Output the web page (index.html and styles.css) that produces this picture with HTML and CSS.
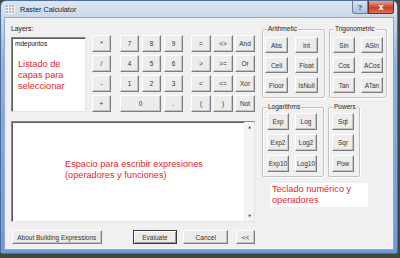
FILE: index.html
```html
<!DOCTYPE html>
<html>
<head>
<meta charset="utf-8">
<link rel="stylesheet" href="styles.css">
</head>
<body>
<div class="window">
  <div class="titlebar">
    <svg class="appicon" width="9" height="9" viewBox="0 0 9 9">
      <rect x="0" y="0" width="9" height="9" fill="#f4f4f4"/>
      <g fill="#b8b8b8">
        <rect x="0" y="0" width="2" height="2"/><rect x="3" y="0" width="2" height="2"/><rect x="6" y="0" width="2" height="2"/>
        <rect x="0" y="3" width="2" height="2"/><rect x="3" y="3" width="2" height="2"/><rect x="6" y="3" width="2" height="2"/>
        <rect x="0" y="6" width="2" height="2"/><rect x="3" y="6" width="2" height="2"/><rect x="6" y="6" width="2" height="2"/>
      </g>
    </svg>
    <span class="title">Raster Calculator</span>
    <div class="caption-btns">
      <span class="cbtn help">?</span>
      <span class="cbtn close">x</span>
    </div>
  </div>
  <div class="client">
    <div class="leftcol">
      <div class="toprow">
        <div class="layers">
          <div class="lbl">Layers:</div>
          <div class="listbox">
            <div class="item">mdepuntos</div>
            <div class="note-red list-note">Listado de<br>capas para<br>seleccionar</div>
          </div>
        </div>
        <div class="keypad">
          <div class="kcol">
            <span class="btn">*</span>
            <span class="btn">/</span>
            <span class="btn">-</span>
            <span class="btn">+</span>
          </div>
          <div class="kgrid digits">
            <span class="btn">7</span><span class="btn">8</span><span class="btn">9</span>
            <span class="btn">4</span><span class="btn">5</span><span class="btn">6</span>
            <span class="btn">1</span><span class="btn">2</span><span class="btn">3</span>
            <span class="btn span2">0</span><span class="btn">.</span>
          </div>
          <div class="kgrid ops">
            <span class="btn">=</span><span class="btn">&lt;&gt;</span><span class="btn">And</span>
            <span class="btn">&gt;</span><span class="btn">&gt;=</span><span class="btn">Or</span>
            <span class="btn">&lt;</span><span class="btn">&lt;=</span><span class="btn">Xor</span>
            <span class="btn">(</span><span class="btn">)</span><span class="btn">Not</span>
          </div>
        </div>
      </div>
      <div class="expr">
        <div class="expr-text note-red">Espacio para escribir expresiones<br>(operadores y funciones)</div>
        <div class="vscroll"><span class="arr">&#9650;</span><span class="arr">&#9660;</span></div>
      </div>
      <div class="bottombar">
        <span class="btn about">About Building Expressions</span>
        <span class="btn eval">Evaluate</span>
        <span class="btn cancel">Cancel</span>
        <span class="btn back">&lt;&lt;</span>
      </div>
    </div>
    <div class="rightcol">
      <div class="grow row1">
        <div class="group arith">
          <span class="legend">Arithmetic</span>
          <div class="gbtns">
            <span class="btn">Abs</span><span class="btn">Int</span>
            <span class="btn">Ceil</span><span class="btn">Float</span>
            <span class="btn">Floor</span><span class="btn">IsNull</span>
          </div>
        </div>
        <div class="group trig">
          <span class="legend">Trigonometric</span>
          <div class="gbtns">
            <span class="btn">Sin</span><span class="btn">ASin</span>
            <span class="btn">Cos</span><span class="btn">ACos</span>
            <span class="btn">Tan</span><span class="btn">ATan</span>
          </div>
        </div>
      </div>
      <div class="grow row2">
        <div class="group logs">
          <span class="legend">Logarithms</span>
          <div class="gbtns">
            <span class="btn">Exp</span><span class="btn">Log</span>
            <span class="btn">Exp2</span><span class="btn">Log2</span>
            <span class="btn">Exp10</span><span class="btn">Log10</span>
          </div>
        </div>
        <div class="group pows">
          <span class="legend">Powers</span>
          <div class="gbtns">
            <span class="btn">Sqt</span>
            <span class="btn">Sqr</span>
            <span class="btn">Pow</span>
          </div>
        </div>
      </div>
      <div class="keynote note-red">Teclado numérico y<br>operadores</div>
    </div>
  </div>
</div>
</body>
</html>
```

FILE: styles.css
```css
* { box-sizing: border-box; }
html, body { margin: 0; padding: 0; }
body {
  width: 400px;
  height: 258px;
  overflow: hidden;
  background: #3f4a3a;
  font-family: "Liberation Sans", Arial, sans-serif;
}
.window {
  width: 398px;
  height: 254px;
  display: flex;
  flex-direction: column;
  background: linear-gradient(180deg, #dce6f2 0px, #c9d8ea 17px, #8fb3e2 60px, #6c9ad9 254px);
  border-radius: 6px 6px 2px 2px;
  border: 1px solid #4f6d96;
}
.titlebar {
  height: 16px;
  display: flex;
  align-items: center;
  padding-left: 5px;
  position: relative;
}
.appicon { margin-right: 5px; }
.title {
  font-size: 7.3px;
  color: #1a1a1a;
}
.caption-btns {
  position: absolute;
  right: 3px;
  top: 0;
  display: flex;
}
.cbtn {
  height: 13px;
  display: flex;
  align-items: center;
  justify-content: center;
  font-size: 8px;
  font-weight: bold;
  color: #fff;
  border: 1px solid #6a7f9c;
  border-top: none;
}
.help {
  width: 16px;
  background: linear-gradient(#d9e5f3, #aac0dc);
  border-radius: 0 0 0 3px;
  color: #3d5a85;
}
.close {
  width: 26px;
  background: linear-gradient(#e8a391, #c7402a 55%, #d8705a);
  border-color: #7a2a20;
  border-radius: 0 0 3px 0;
  font-family: "DejaVu Sans", sans-serif;
}
.client {
  flex: 1;
  margin: 0 3px 3px 3px;
  background: #f0f0f0;
  border: 1px solid #8ea9cf;
  display: flex;
  padding: 7px 0 0 6px;
  gap: 7px;
  font-size: 6.5px;
  color: #222;
}
.leftcol {
  width: 244px;
  display: flex;
  flex-direction: column;
}
.toprow {
  display: flex;
  gap: 6px;
}
.layers {
  width: 76px;
  display: flex;
  flex-direction: column;
}
.lbl {
  height: 10px;
  line-height: 8px;
  margin-bottom: 2px;
  font-size: 6.8px;
}
.listbox {
  height: 75px;
  background: #fff;
  border: 1px solid;
  border-color: #8a8a8a #e4e4e4 #e4e4e4 #8a8a8a;
  box-shadow: inset 1px 1px 0 #5a5a5a;
  padding: 2px 3px;
}
.item { font-size: 6.5px; line-height: 7px; color: #111; }
.note-red {
  color: #e2262e;
  font-size: 9.2px;
  line-height: 11px;
}
.list-note { margin-top: 12px; margin-left: 3px; }
.keypad {
  display: flex;
  padding-top: 10px;
}
.kcol {
  width: 19px;
  display: grid;
  grid-template-rows: repeat(4, 17px);
  row-gap: 3px;
  margin-right: 9px;
}
.kgrid {
  display: grid;
  grid-template-rows: repeat(4, 17px);
  row-gap: 3px;
}
.digits {
  grid-template-columns: repeat(3, 19px);
  column-gap: 3px;
  margin-right: 8px;
}
.ops {
  grid-template-columns: repeat(3, 20px);
  column-gap: 2px;
}
.span2 { grid-column: span 2; }
.btn {
  display: flex;
  align-items: center;
  justify-content: center;
  background: #ececec;
  border: 1px solid;
  border-color: #ffffff #7c7c7c #7c7c7c #ffffff;
  box-shadow: inset -1px -1px 0 #c6c6c6;
  font-size: 6.5px;
  color: #333;
  white-space: nowrap;
}
.expr {
  margin-top: 9px;
  height: 101px;
  background: #fff;
  border: 1px solid;
  border-color: #8a8a8a #e4e4e4 #e4e4e4 #8a8a8a;
  box-shadow: inset 1px 1px 0 #5a5a5a;
  display: flex;
  justify-content: space-between;
}
.expr-text {
  margin-top: 37px;
  margin-left: 53px;
  line-height: 10.5px;
}
.vscroll {
  width: 10px;
  background: #f4f4f4;
  border-left: 1px solid #ececec;
  display: flex;
  flex-direction: column;
  justify-content: space-between;
  align-items: center;
  padding: 3px 0 3px;
}
.arr {
  font-size: 3.5px;
  color: #555;
  font-family: "DejaVu Sans", sans-serif;
}
.bottombar {
  margin-top: 8px;
  height: 14px;
  display: flex;
}
.bottombar .btn { height: 14px; }
.about { width: 90px; margin-left: 1px; }
.eval {
  width: 45px;
  margin-left: 31px;
  border: 1px solid #3a3a3a;
  box-shadow: inset 1px 1px 0 #fff, inset -1px -1px 0 #9a9a9a;
}
.cancel { width: 45px; margin-left: 6px; }
.back { width: 19px; margin-left: 8px; }
.rightcol {
  display: flex;
  flex-direction: column;
  width: 126px;
}
.grow { display: flex; gap: 4px; }
.row1 { margin-top: 4px; height: 69px; }
.row2 { margin-top: 9px; height: 70px; }
.group {
  position: relative;
  border: 1px solid #c2c2c2;
  box-shadow: 1px 1px 0 #fff, inset 1px 1px 0 #fff;
  border-radius: 2px;
  height: 100%;
}
.legend {
  position: absolute;
  top: -5px;
  left: 4px;
  background: #f0f0f0;
  padding: 0 1px;
  font-size: 6.5px;
  line-height: 8px;
  color: #222;
}
.gbtns {
  display: grid;
  row-gap: 4px;
}
.arith { width: 63px; }
.arith .gbtns {
  grid-template-columns: 23px 23px;
  grid-template-rows: repeat(3, 16px);
  column-gap: 7px;
  padding: 7px 0 0 2px;
}
.trig { width: 58px; }
.trig .gbtns {
  grid-template-columns: 22px 22px;
  grid-template-rows: repeat(3, 16px);
  column-gap: 6px;
  padding: 7px 0 0 3px;
}
.logs { width: 62px; }
.logs .gbtns {
  grid-template-columns: 22px 22px;
  grid-template-rows: repeat(3, 17px);
  column-gap: 6px;
  padding: 5px 0 0 4px;
}
.pows { width: 32px; }
.pows .gbtns {
  grid-template-columns: 22px;
  grid-template-rows: repeat(3, 17px);
  padding: 5px 0 0 3px;
}
.keynote {
  margin-top: 6px;
  margin-left: 8px;
  width: 98px;
  height: 24px;
  background: #fff;
  padding: 1px 2px;
}
```
